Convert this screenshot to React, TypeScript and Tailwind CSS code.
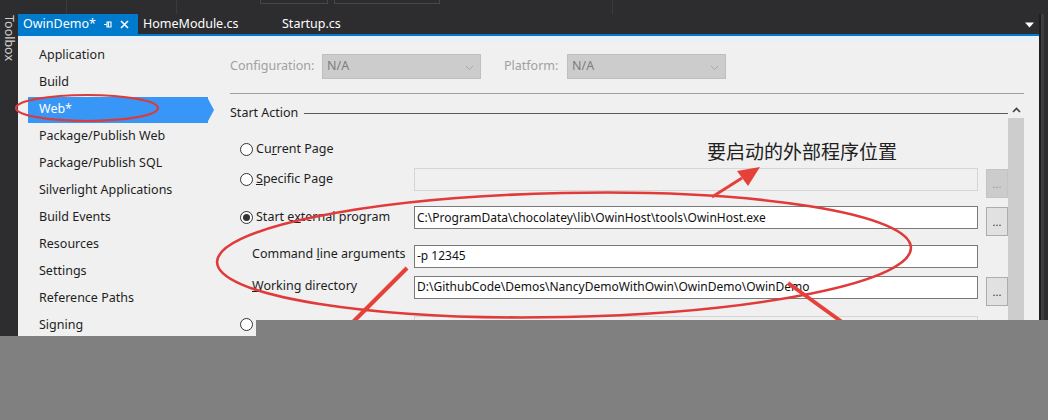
import React from "react";

const ui = { fontFamily: '"Noto Sans", "Liberation Sans", sans-serif' };
const cjk = { fontFamily: '"Noto Sans CJK SC", "Noto Sans", sans-serif' };

const pages = [
  "Application",
  "Build",
  "Web*",
  "Package/Publish Web",
  "Package/Publish SQL",
  "Silverlight Applications",
  "Build Events",
  "Resources",
  "Settings",
  "Reference Paths",
  "Signing",
];

function Radio({ checked }: { checked?: boolean }) {
  return (
    <span className="w-[13px] h-[13px] rounded-full border border-[#333] bg-white flex items-center justify-center shrink-0">
      {checked && <span className="w-[7px] h-[7px] rounded-full bg-[#333]" />}
    </span>
  );
}

function Chevron() {
  return (
    <svg width="9" height="6" viewBox="0 0 9 6" className="absolute right-[6px] top-[10px]">
      <path d="M1 1l3.5 3.5L8 1" fill="none" stroke="#a8a8a8" strokeWidth="1" />
    </svg>
  );
}

function Dots({ disabled }: { disabled?: boolean }) {
  return (
    <div
      className={`w-[22px] h-[29px] border flex items-center justify-center text-[11px] leading-none ${
        disabled ? "bg-[#cccccc] border-[#c4c4c4] text-[#9a9a9a]" : "bg-[#e1e1e1] border-[#adadad] text-[#333]"
      }`}
    >
      ...
    </div>
  );
}

function Field({ value, disabled }: { value?: string; disabled?: boolean }) {
  return (
    <div
      className={`w-[564px] h-[23px] border px-[2px] flex items-center text-[12px] text-[#111] ${
        disabled ? "bg-[#f0f0f0] border-[#d5d5d5]" : "bg-white border-[#7a7a7a]"
      }`}
    >
      {value}
    </div>
  );
}

export default function App() {
  return (
    <div className="relative w-[1048px] h-[420px] overflow-hidden bg-[#2d2d30]" style={ui}>
      {/* top toolbar remnants */}
      <div className="h-[14px] relative">
        <div className="absolute left-[66px] top-0 w-px h-[14px] bg-[#3a3a3d]" />
        <div className="absolute left-[176px] top-0 w-px h-[14px] bg-[#3a3a3d]" />
        <div className="absolute left-[260px] top-[-2px] w-[68px] h-[6px] border border-[#47474a]" />
        <div className="absolute left-[334px] top-[-2px] w-[106px] h-[6px] border border-[#47474a]" />
        <div className="absolute left-[612px] top-0 w-px h-[14px] bg-[#3a3a3d]" />
      </div>

      <div className="flex h-[406px]">
        {/* toolbox strip */}
        <div className="w-[18px] shrink-0 flex justify-center pt-[1px]">
          <span className="[writing-mode:vertical-rl] text-[12.5px] text-[#d0d0d0] leading-none">Toolbox</span>
        </div>

        <div className="w-[1021px] flex flex-col">
          {/* tabs */}
          <div className="h-[20px] flex items-stretch text-[12.5px] text-white">
            <div className="w-[120px] bg-[#007acc] flex items-center pl-[5px] gap-[7px]">
              <span>OwinDemo*</span>
              <svg width="10" height="9" viewBox="0 0 10 9">
                <path d="M1 4.5h3M4 1.5v6M4 2h4v5H4M5.5 2v5" fill="none" stroke="#fff" strokeWidth="1.1" />
              </svg>
              <svg width="9" height="9" viewBox="0 0 9 9">
                <path d="M1 1l7 7M8 1L1 8" stroke="#fff" strokeWidth="1.6" />
              </svg>
            </div>
            <div className="pl-[5px] w-[144px] flex items-center">HomeModule.cs</div>
            <div className="flex items-center">Startup.cs</div>
            <div className="ml-auto w-[20px] flex items-center justify-center">
              <svg width="9" height="7" viewBox="0 0 9 7">
                <path d="M0 1.5h9L4.5 6.5z" fill="#fff" />
              </svg>
            </div>
          </div>
          <div className="h-[2px] bg-[#007acc]" />

          {/* property pages */}
          <div className="flex-1 bg-[#f0f0f0] flex flex-col">
            <div className="h-[6px] bg-[#eaf0f6]" />
            <div className="flex flex-1">
              {/* page list */}
              <div className="w-[192px] shrink-0 text-[12.5px] text-[#1e1e1e]">
                {pages.map((p) =>
                  p === "Web*" ? (
                    <div key={p} className="relative h-[27px] flex items-center">
                      <div className="absolute left-[10px] top-px w-[180px] h-[26px] bg-[#3796f6]" />
                      <div className="absolute left-[189px] top-px w-0 h-0 border-y-[13px] border-y-transparent border-l-[7px] border-l-[#3796f6]" />
                      <span className="relative pl-[21px] text-white">{p}</span>
                    </div>
                  ) : (
                    <div key={p} className="h-[27px] flex items-center pl-[21px]">
                      {p}
                    </div>
                  )
                )}
              </div>

              {/* page body */}
              <div className="flex-1 pl-[20px] pr-[15px] flex flex-col">
                <div className="h-[51px] flex items-center text-[12.5px] text-[#a0a0a0] pb-[3px]">
                  <span className="w-[92px]">Configuration:</span>
                  <div className="relative w-[159px] h-[25px] bg-[#cccccc] border border-[#bfbfbf] flex items-center pl-[4px] text-[#7c7c7c]">
                    N/A
                    <Chevron />
                  </div>
                  <span className="ml-[23px] w-[63px]">Platform:</span>
                  <div className="relative w-[159px] h-[25px] bg-[#cccccc] border border-[#bfbfbf] flex items-center pl-[4px] text-[#7c7c7c]">
                    N/A
                    <Chevron />
                  </div>
                </div>
                <div className="h-px bg-[#a0a0a0]" />

                <div className="flex flex-1 mt-[7px]">
                  <div className="flex-1 flex flex-col">
                    <div className="h-[25px] flex items-center gap-[6px] text-[12.5px] text-[#1e1e1e]">
                      <span>Start Action</span>
                      <div className="flex-1 h-px bg-[#5a5a5a]" />
                    </div>

                    <div className="pl-[10px] text-[12.5px] text-[#1e1e1e]">
                      <div className="h-[29px] mt-[9px] flex items-center gap-[3px]">
                        <Radio />
                        <span>
                          Cu<u>r</u>rent Page
                        </span>
                      </div>
                      <div className="h-[30px] flex items-center">
                        <div className="w-[174px] flex items-center gap-[3px]">
                          <Radio />
                          <span>
                            <u>S</u>pecific Page
                          </span>
                        </div>
                        <Field disabled />
                        <div className="ml-[8px] mt-[9px]">
                          <Dots disabled />
                        </div>
                      </div>
                      <div className="h-[47px] flex items-center">
                        <div className="w-[174px] flex items-center gap-[3px]">
                          <Radio checked />
                          <span>
                            Start e<u>x</u>ternal program
                          </span>
                        </div>
                        <Field value="C:\ProgramData\chocolatey\lib\OwinHost\tools\OwinHost.exe" />
                        <div className="ml-[8px] mt-[8px]">
                          <Dots />
                        </div>
                      </div>
                      <div className="h-[30px] flex items-center">
                        <span className="w-[174px] pl-[12px] -mt-[3px]">
                          Command <u>l</u>ine arguments
                        </span>
                        <Field value="-p 12345" />
                      </div>
                      <div className="h-[32px] flex items-center">
                        <span className="w-[174px] pl-[12px] -mt-[2px]">
                          <u>W</u>orking directory
                        </span>
                        <Field value="D:\GithubCode\Demos\NancyDemoWithOwin\OwinDemo\OwinDemo" />
                        <div className="ml-[8px] mt-[8px]">
                          <Dots />
                        </div>
                      </div>
                      <div className="h-[30px] flex items-start pt-[13px]">
                        <div className="w-[174px] pt-[2px]">
                          <Radio />
                        </div>
                        <div className="w-[564px] h-[23px] border border-[#d5d5d5] bg-[#f0f0f0]" />
                      </div>
                    </div>
                  </div>

                  {/* scrollbar */}
                  <div className="w-[16px] flex flex-col">
                    <div className="h-[17px] flex items-center justify-center">
                      <svg width="9" height="6" viewBox="0 0 9 6">
                        <path d="M1 5l3.5-3.5L8 5" fill="none" stroke="#404040" strokeWidth="1.6" />
                      </svg>
                    </div>
                    <div className="flex-1 bg-[#cdcdcd]" />
                  </div>
                </div>
              </div>
            </div>
          </div>
        </div>

        {/* right edge */}
        <div className="w-[9px] shrink-0 flex">
          <div className="w-[2px] bg-[#1e1e1e]" />
          <div className="w-[3px] bg-[#3e3e42]" />
        </div>
      </div>

      {/* annotations */}
      <svg className="absolute inset-0 pointer-events-none" width="1048" height="420" viewBox="0 0 1048 420">
        <ellipse cx="87" cy="108" rx="71" ry="13" fill="none" stroke="#dc3b3b" strokeWidth="2.2" />
        <ellipse cx="564" cy="255" rx="347" ry="62" transform="rotate(-1.2 564 255)" fill="none" stroke="#e03a3a" strokeWidth="2.6" />
        <line x1="712" y1="197" x2="742" y2="178" stroke="#e5403a" strokeWidth="3" />
        <polygon points="760,167 737,171 748,186" fill="#e5403a" />
        <path d="M407 268 L353 322" stroke="#e5403a" strokeWidth="4" />
        <path d="M788 283 L842 322" stroke="#e5403a" strokeWidth="4" />
      </svg>
      <div className="absolute left-[707px] top-[139px] text-[19px] leading-[24px] text-[#202020]" style={cjk}>
        要启动的外部程序位置
      </div>

      {/* cropped-out lower part of the screenshot */}
      <div className="absolute left-[256px] top-[320px] right-0 h-[16px] bg-[#808080]" />
      <div className="absolute left-0 top-[336px] right-0 bottom-0 bg-[#808080]" />
    </div>
  );
}
